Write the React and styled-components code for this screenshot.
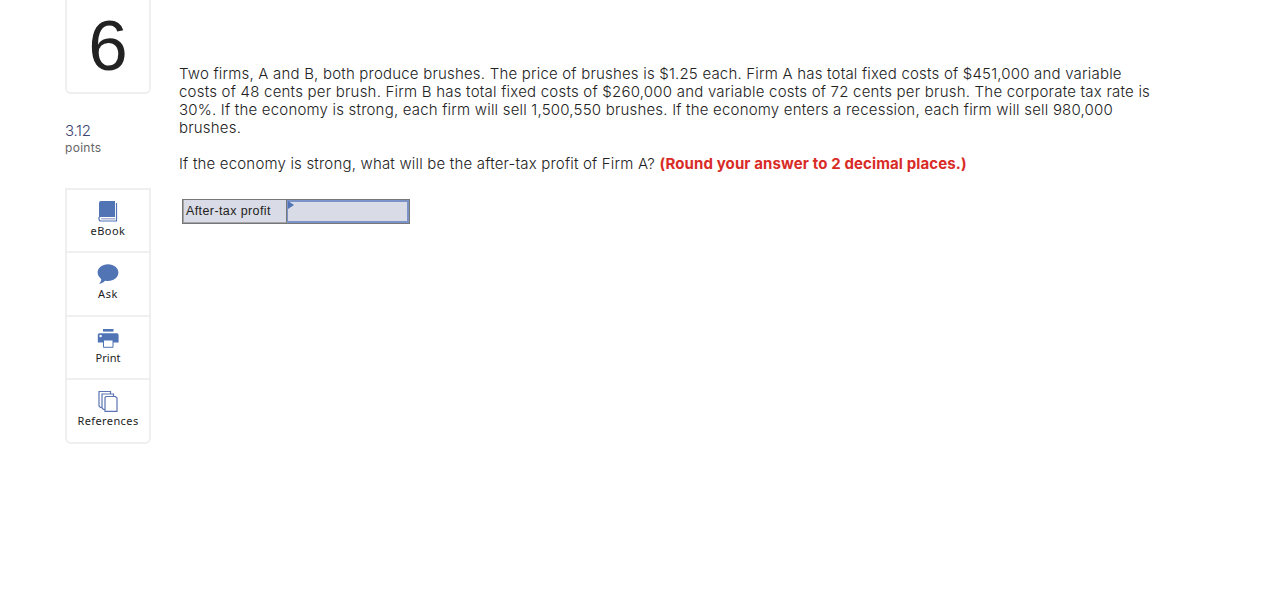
import styled, { createGlobalStyle } from "styled-components";

const tools = [
  { label: "eBook", icon: <BookIcon />, spacing: 0.45 },
  { label: "Ask", icon: <AskIcon />, spacing: 0.6 },
  { label: "Print", icon: <PrintIcon />, spacing: 0 },
  { label: "References", icon: <ReferencesIcon />, spacing: 0.4 },
];

const lines = [
  {
    text: "Two firms, A and B, both produce brushes. The price of brushes is $1.25 each. Firm A has total fixed costs of $451,000 and variable",
    spacing: 0.197,
  },
  {
    text: "costs of 48 cents per brush. Firm B has total fixed costs of $260,000 and variable costs of 72 cents per brush. The corporate tax rate is",
    spacing: 0.218,
  },
  {
    text: "30%. If the economy is strong, each firm will sell 1,500,550 brushes. If the economy enters a recession, each firm will sell 980,000",
    spacing: 0.2,
  },
  { text: "brushes.", spacing: 0.2 },
];

const App = () => {
  return (
    <>
      <GlobalStyle />
      <Page>
        <Sidebar>
          <QuestionNumber>6</QuestionNumber>
          <Points>3.12</Points>
          <PointsLabel>points</PointsLabel>
          <ToolList>
            {tools.map((tool) => (
              <ToolButton key={tool.label}>
                {tool.icon}
                <ToolLabel $spacing={tool.spacing}>{tool.label}</ToolLabel>
              </ToolButton>
            ))}
          </ToolList>
        </Sidebar>
        <Content>
          <Paragraph>
            {lines.map((line) => (
              <Line key={line.text} $spacing={line.spacing}>
                {line.text}
              </Line>
            ))}
          </Paragraph>
          <Paragraph>
            <Line $spacing={0.185}>
              If the economy is strong, what will be the after-tax profit of
              Firm A? <Hint>(Round your answer to 2 decimal places.)</Hint>
            </Line>
          </Paragraph>
          <AnswerTable>
            <AnswerLabel>After-tax profit</AnswerLabel>
            <AnswerCell>
              <Marker />
              <AnswerInput aria-label="After-tax profit" />
            </AnswerCell>
          </AnswerTable>
        </Content>
      </Page>
    </>
  );
};

export default App;

function BookIcon() {
  return (
    <Icon viewBox="0 0 22 22">
      <path d="M4 1H18V17H4Q2 17 2 18V3Q2 1 4 1Z" fill="#5174b5" />
      <path
        d="M19.5 3V21H4Q2 21 2 19V17"
        fill="none"
        stroke="#5174b5"
        strokeWidth="1.2"
      />
      <path d="M18 18H5Q3.8 18 3.8 18.8T5 19.6H18Z" fill="#a9b1d3" />
    </Icon>
  );
}

function AskIcon() {
  return (
    <Icon viewBox="0 0 22 22">
      <path
        d="M11 1.2C17 1.2 21.4 4.8 21.4 9.6C21.4 14.4 17 18 11 18C10 18 9 17.9 8 17.7C6.4 19.5 4.7 20.4 2 20.8C3.6 19.4 4.2 18 4.2 16C2 14.4 0.6 12.2 0.6 9.6C0.6 4.8 5 1.2 11 1.2Z"
        fill="#5174b5"
      />
    </Icon>
  );
}

function PrintIcon() {
  return (
    <Icon viewBox="0 0 22 22">
      <path d="M6 2H16.5V4.6H6Z" fill="#5174b5" />
      <path
        d="M2.5 6.2H20Q21.6 6.2 21.6 8V15.5H0.8V7.7Q0.8 6.2 2.5 6.2Z"
        fill="#5174b5"
      />
      <circle cx="3.6" cy="9" r="1.2" fill="#fff" />
      <path d="M6.5 13H16V20.3H6.5Z" fill="#fff" stroke="#5174b5" />
    </Icon>
  );
}

function ReferencesIcon() {
  return (
    <Icon viewBox="0 0 22 22">
      <g fill="#fff" stroke="#5c74b3" strokeWidth="1.2">
        <path d="M2 1.5H13.5V17.5H3.5L2 16Z" />
        <path d="M5 4H16.5V19.5H6.5L5 18Z" />
        <path d="M9 6.5H18.5L20 8V21.3H8V7.5Z" />
      </g>
    </Icon>
  );
}

const GlobalStyle = createGlobalStyle`
  body {
    margin: 0;
    background: #fff;
    color: #222;
    font-family: "Inter", sans-serif;
  }

  * {
    box-sizing: border-box;
  }
`;

const Page = styled.div`
  display: flex;
  gap: 28px;
  padding-left: 65px;
  height: 603px;
  overflow: hidden;
`;

const Sidebar = styled.aside`
  display: flex;
  flex-direction: column;
  width: 86px;
`;

const QuestionNumber = styled.div`
  display: flex;
  justify-content: center;
  align-items: center;
  height: 94px;
  border: 2px solid #efefef;
  border-top: none;
  border-radius: 0 0 6px 6px;
  font-family: "Liberation Sans", sans-serif;
  font-size: 71px;
  line-height: 82px;
`;

const Points = styled.div`
  margin-top: 28px;
  color: #3c4370;
  font-size: 15px;
  font-weight: 300;
  line-height: 18px;
  letter-spacing: -0.3px;
`;

const PointsLabel = styled.div`
  margin-top: 1px;
  color: #666;
  font-size: 12px;
  line-height: 14px;
  letter-spacing: 0.3px;
`;

const ToolList = styled.nav`
  margin-top: 33px;
  border: 2px solid #efefef;
  border-radius: 0 0 6px 6px;
`;

const ToolButton = styled.button`
  display: flex;
  flex-direction: column;
  align-items: center;
  width: 100%;
  height: 63.5px;
  padding: 10px 0 0;
  border: none;
  background: transparent;

  &:first-child {
    height: 61px;
  }

  &:last-child {
    height: 64px;
  }

  & + & {
    border-top: 2px solid #efefef;
  }
`;

const Icon = styled.svg`
  width: 22px;
  height: 22px;
`;

const ToolLabel = styled.span`
  margin-top: 1px;
  color: #222;
  font-family: "Noto Sans", sans-serif;
  font-size: 11px;
  line-height: 16px;
  letter-spacing: ${(props) => props.$spacing}px;
`;

const Content = styled.main`
  padding-top: 65px;
  font-size: 15px;
  font-weight: 300;
`;

const Paragraph = styled.p`
  margin: 0 0 18px;
  line-height: 18px;
`;

const Line = styled.span`
  display: block;
  white-space: nowrap;
  letter-spacing: ${(props) => props.$spacing}px;
`;

const Hint = styled.strong`
  color: #d92b26;
  font-weight: 700;
  letter-spacing: 0.12px;
`;

const AnswerTable = styled.div`
  display: flex;
  width: 228px;
  height: 25px;
  margin: 26px 0 0 3px;
  border: 1px solid #777;
  background: #d9dce6;
`;

const AnswerLabel = styled.label`
  width: 104px;
  padding-left: 2px;
  border: 1px solid #a3a4a8;
  border-top: none;
  border-right-color: #777;
  font-family: "Liberation Sans", sans-serif;
  font-size: 12.5px;
  font-weight: 400;
  line-height: 22px;
  letter-spacing: 0.4px;
  white-space: nowrap;
`;

const AnswerCell = styled.div`
  position: relative;
  flex: 1;
  border: 2px solid #7b93c8;
  border-left-width: 1px;
`;

const Marker = styled.span`
  position: absolute;
  top: -1px;
  left: 0;
  border-top: 4.5px solid transparent;
  border-bottom: 4.5px solid transparent;
  border-left: 6px solid #5174b5;
`;

const AnswerInput = styled.input`
  display: block;
  width: 100%;
  height: 100%;
  padding: 0 4px;
  border: none;
  outline: none;
  background: transparent;
`;
